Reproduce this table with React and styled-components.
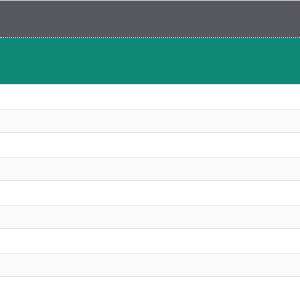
import React from "react";
import styled, { createGlobalStyle } from "styled-components";

const Global = createGlobalStyle`
  html, body { margin: 0; padding: 0; background: #ffffff; font-family: "Liberation Sans", Arial, sans-serif; }
  * { box-sizing: border-box; }
`;

const Page = styled.div`
  display: flex;
  flex-direction: column;
  width: 300px;
  height: 300px;
  overflow: hidden;
`;

const TopBar = styled.header`
  height: 38px;
  flex: none;
  background: #57585d;
  border-top: 1px solid #b9b9bc;
  border-bottom: 1px dotted #c3c4c7;
`;

const Banner = styled.div`
  height: 47px;
  flex: none;
  background: #108a78;
  border-bottom: 1px solid #e0e0e0;
`;

const List = styled.div`
  display: flex;
  flex-direction: column;
`;

const Row = styled.div`
  height: 24px;
  flex: none;
  background: ${(p) => (p.$shaded ? "#fafafa" : "#ffffff")};
  border-top: ${(p) => (p.$shaded ? "1px solid #ececec" : "none")};
  border-bottom: ${(p) => (p.$shaded ? "1px solid #e2e2e2" : "none")};
`;

export default function App() {
  const rows = Array.from({ length: 9 }, (_, i) => i);
  return (
    <>
      <Global />
      <Page>
        <TopBar />
        <Banner />
        <List>
          {rows.map((i) => (
            <Row key={i} $shaded={i % 2 === 1} />
          ))}
        </List>
      </Page>
    </>
  );
}
